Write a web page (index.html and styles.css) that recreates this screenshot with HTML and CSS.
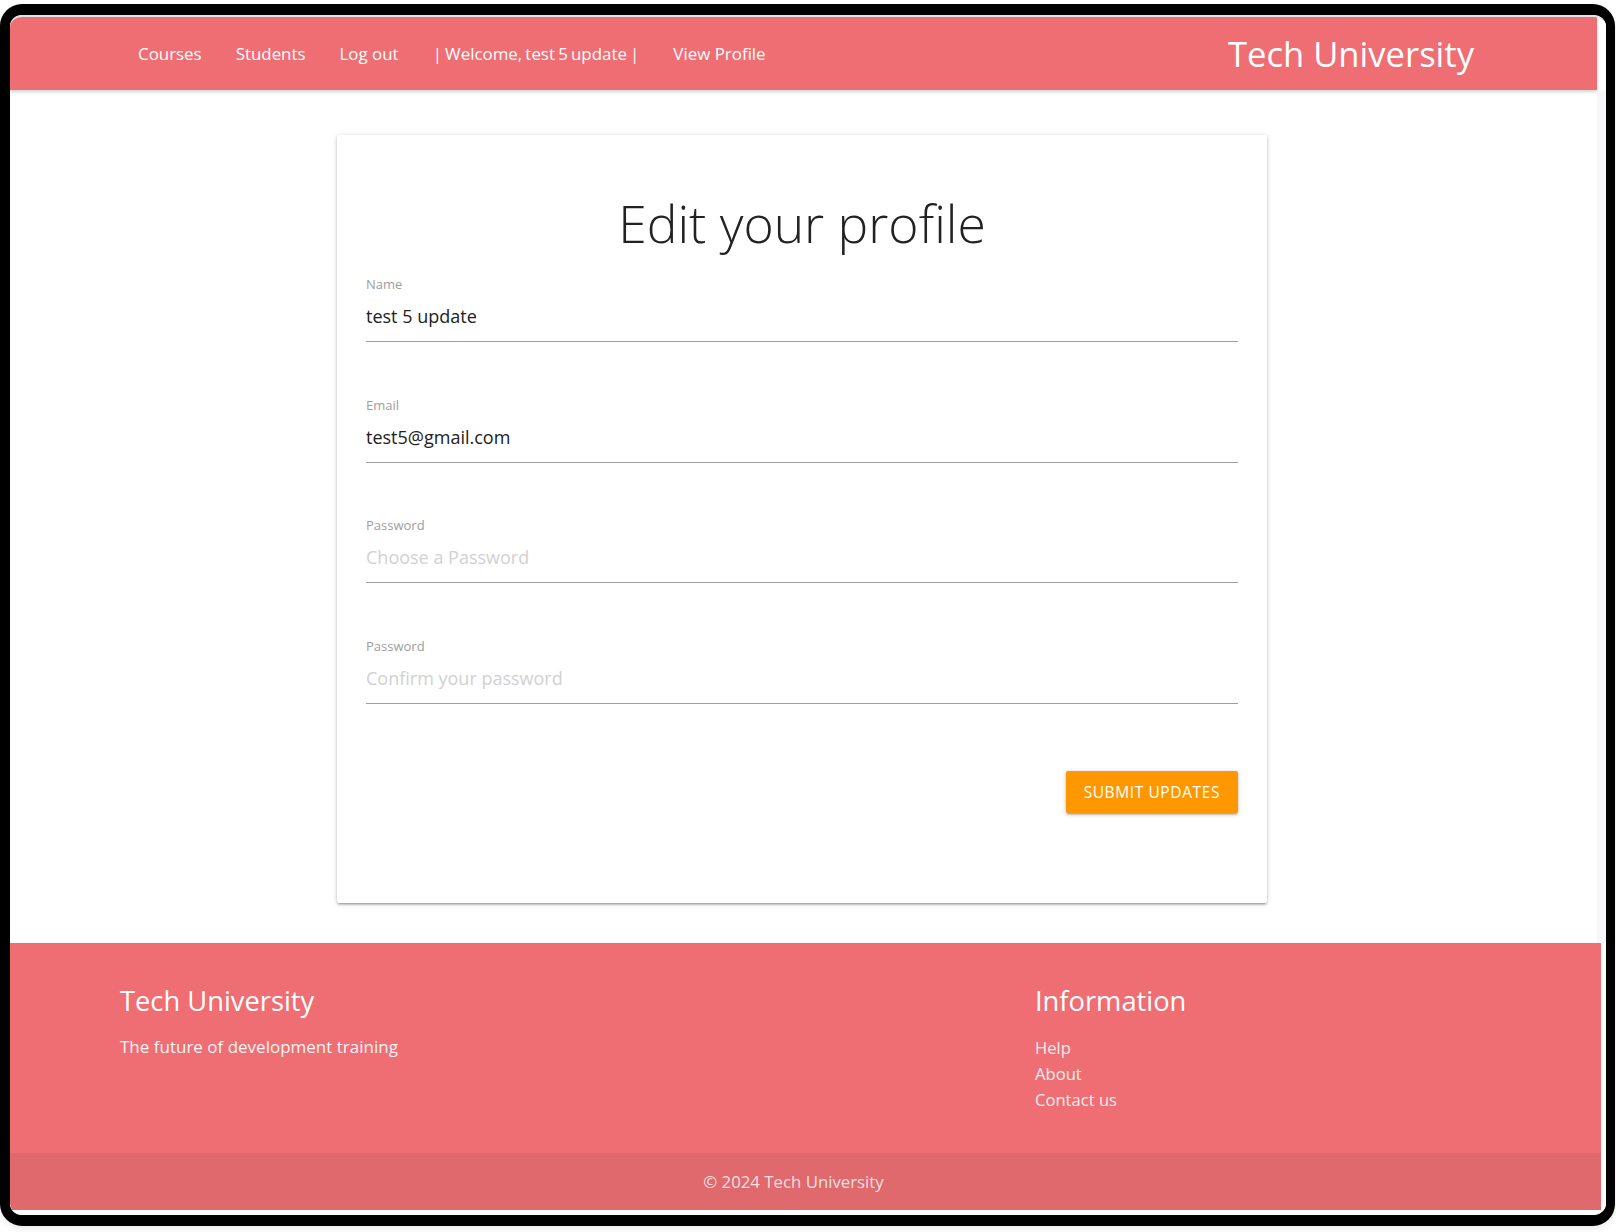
FILE: index.html
```html
<!DOCTYPE html>
<html lang="en">
<head>
<meta charset="utf-8">
<title>Edit your profile - Tech University</title>
<link rel="stylesheet" href="styles.css">
</head>
<body>
<div class="frame">
  <div class="viewport">
    <header class="topbar">
      <nav class="nav-links">
        <a href="#">Courses</a>
        <a href="#">Students</a>
        <a href="#">Log out</a>
        <span class="welcome">| Welcome, test 5 update |</span>
        <a href="#">View Profile</a>
      </nav>
      <a class="brand" href="#">Tech University</a>
    </header>

    <main class="main">
      <section class="card">
        <h1 class="card-title">Edit your profile</h1>
        <form class="profile-form">
          <div class="field">
            <label class="field-label" for="name">Name</label>
            <input class="field-input" id="name" type="text" value="test 5 update">
          </div>
          <div class="field">
            <label class="field-label" for="email">Email</label>
            <input class="field-input" id="email" type="email" value="test5@gmail.com">
          </div>
          <div class="field">
            <label class="field-label" for="pw">Password</label>
            <input class="field-input" id="pw" type="password" placeholder="Choose a Password">
          </div>
          <div class="field">
            <label class="field-label" for="pw2">Password</label>
            <input class="field-input" id="pw2" type="password" placeholder="Confirm your password">
          </div>
          <div class="actions">
            <button class="submit-btn" type="button">Submit updates</button>
          </div>
        </form>
      </section>
    </main>

    <footer class="site-footer">
      <div class="footer-main">
        <div class="footer-about">
          <h5 class="footer-title">Tech University</h5>
          <p class="footer-text">The future of development training</p>
        </div>
        <div class="footer-info">
          <h5 class="footer-title">Information</h5>
          <ul class="footer-links">
            <li><a href="#">Help</a></li>
            <li><a href="#">About</a></li>
            <li><a href="#">Contact us</a></li>
          </ul>
        </div>
      </div>
      <div class="footer-copy">© 2024 Tech University</div>
    </footer>
  </div>
</div>
</body>
</html>
```

FILE: styles.css
```css
html, body {
  margin: 0;
  padding: 0;
  background: #ffffff;
}

body {
  font-family: "Open Sans", "Noto Sans", sans-serif;
  width: 1616px;
  height: 1232px;
  overflow: hidden;
}

.frame {
  box-sizing: border-box;
  width: 1615px;
  height: 1222px;
  margin-top: 4px;
  border-style: solid;
  border-color: #000;
  border-width: 11px 9px 11px 10px;
  border-radius: 22px;
  overflow: hidden;
  box-shadow: 0 3px 6px rgba(0, 0, 0, 0.08);
}

.viewport {
  box-sizing: border-box;
  height: 100%;
  display: flex;
  flex-direction: column;
  background: #fff;
  border-top: 2px solid #e2e2e2;
  padding-bottom: 5px;
  border-radius: 12px;
  overflow: hidden;
}

/* ---------- top bar ---------- */
.topbar {
  flex: none;
  box-sizing: border-box;
  height: 73px;
  margin-right: 9px;
  padding: 0 123px 0 128px;
  background: #ef6e73;
  display: flex;
  align-items: center;
  justify-content: space-between;
  box-shadow: 0 2px 3px rgba(0, 0, 0, 0.18);
  position: relative;
  z-index: 1;
}

.nav-links {
  display: flex;
  align-items: center;
  gap: 34px;
}

.nav-links a,
.nav-links .welcome {
  color: #fff;
  text-decoration: none;
  font-size: 16.9px;
  line-height: 24px;
}

.nav-links .welcome {
  word-spacing: -1.2px;
}

.brand {
  color: #fff;
  text-decoration: none;
  font-size: 34.6px;
  line-height: 40px;
}

/* ---------- main ---------- */
.main {
  flex: 1;
  border-right: 9px solid #f6f6fb;
  padding-right: 3px;
  display: flex;
  flex-direction: column;
  align-items: center;
}

.card {
  box-sizing: border-box;
  width: 930px;
  margin-top: 45px;
  padding: 57px 29px 90px;
  background: #fff;
  border-radius: 2px;
  box-shadow: 0 2px 2px 0 rgba(0, 0, 0, 0.14),
              0 3px 1px -2px rgba(0, 0, 0, 0.12),
              0 1px 5px 0 rgba(0, 0, 0, 0.2);
}

.card-title {
  margin: 0 0 22px;
  text-align: center;
  font-weight: 300;
  font-size: 51.6px;
  line-height: 62px;
  color: #222;
}

.field {
  margin-bottom: 54.5px;
}

.field:last-of-type {
  margin-bottom: 0;
}

.field-label {
  display: block;
  font-size: 13px;
  line-height: 16px;
  color: #9e9e9e;
  margin-bottom: 12px;
}

.field-input {
  display: block;
  box-sizing: content-box;
  width: 100%;
  height: 24px;
  margin: 0;
  padding: 0 0 13px;
  border: none;
  border-bottom: 1px solid #9e9e9e;
  border-radius: 0;
  outline: none;
  background: transparent;
  font-family: "Open Sans", "Noto Sans", sans-serif;
  font-size: 18px;
  line-height: 24px;
  color: #212121;
}

.field-input::placeholder {
  color: #d1d1d1;
}

.actions {
  display: flex;
  justify-content: flex-end;
  margin-top: 67px;
}

.submit-btn {
  height: 42px;
  padding: 0 18px;
  border: none;
  border-radius: 2px;
  background: #ff9800;
  color: #fff;
  font-family: "Open Sans", "Noto Sans", sans-serif;
  font-size: 15.5px;
  letter-spacing: 0.6px;
  text-transform: uppercase;
  box-shadow: 0 2px 2px 0 rgba(0, 0, 0, 0.14),
              0 3px 1px -2px rgba(0, 0, 0, 0.12),
              0 1px 5px 0 rgba(0, 0, 0, 0.2);
  cursor: pointer;
}

/* ---------- footer ---------- */
.site-footer {
  flex: none;
  margin-right: 5px;
  background: #ef6e73;
}

.footer-main {
  box-sizing: border-box;
  height: 210px;
  padding: 41px 0 0 110px;
  display: flex;
}

.footer-about {
  width: 915px;
}

.footer-title {
  margin: 0 0 18px;
  font-weight: 400;
  font-size: 27.3px;
  line-height: 33px;
  color: #fff;
}

.footer-text {
  margin: 0;
  font-size: 17px;
  line-height: 24px;
  color: #f5f5f5;
}

.footer-links {
  list-style: none;
  margin: 0;
  padding: 0;
}

.footer-links a {
  font-size: 16.6px;
  line-height: 26px;
  color: #eeeeee;
  text-decoration: none;
}

.footer-copy {
  height: 57px;
  padding-right: 24px;
  display: flex;
  align-items: center;
  justify-content: center;
  background: rgba(51, 51, 51, 0.08);
  color: rgba(255, 255, 255, 0.8);
  font-size: 16.8px;
}
```
